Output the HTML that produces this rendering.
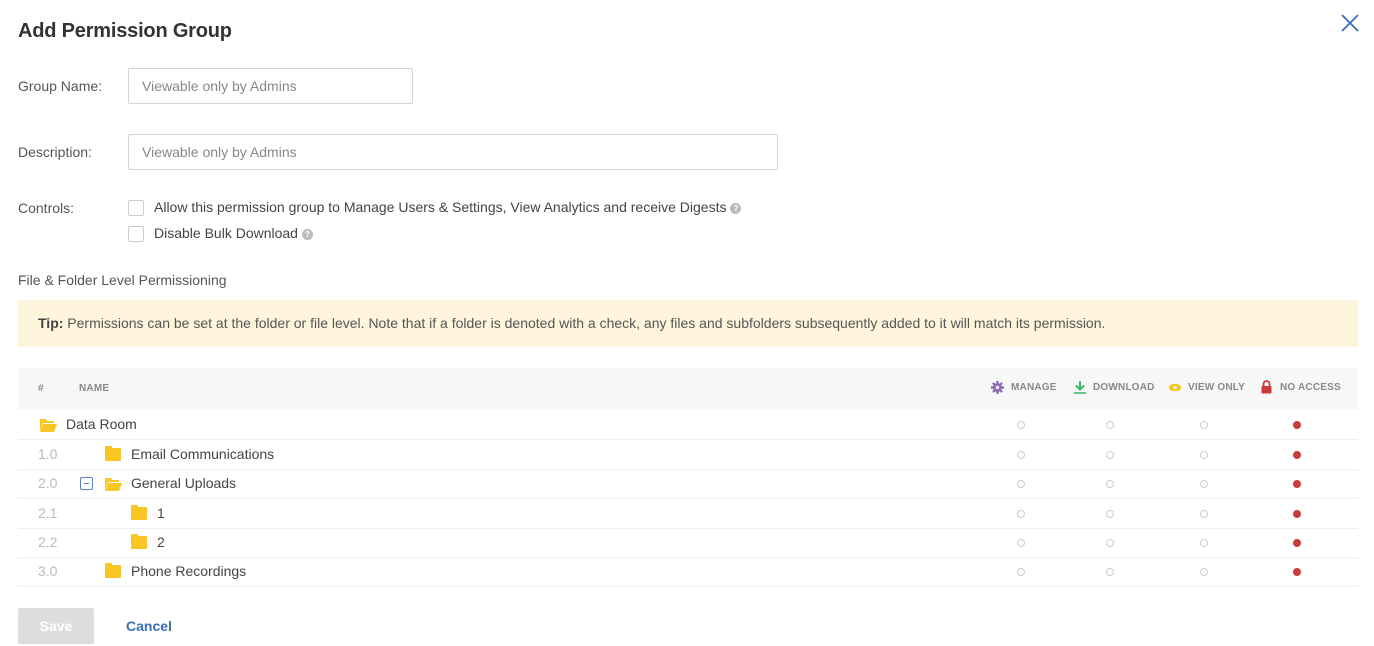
<!DOCTYPE html>
<html><head><style>
*{box-sizing:border-box;margin:0;padding:0}
body{width:1374px;height:646px;background:#fff;font-family:"Liberation Sans",Arial,sans-serif;color:#444;position:relative;overflow:hidden}
.abs{position:absolute}
h1{position:absolute;left:18px;top:20px;font-size:20px;font-weight:bold;color:#333;letter-spacing:-0.2px}
.lbl{position:absolute;left:18px;font-size:14px;color:#555}
.inp{position:absolute;left:128px;height:36px;border:1px solid #d5d5d5;border-radius:2px;font-size:14px;color:#888;padding:9px 13px}
.cb{position:absolute;left:128px;width:16px;height:16px;border:1px solid #ccc;border-radius:2px}
.ct{position:absolute;left:154px;font-size:14px;color:#444}
.q{display:inline-block;width:11px;height:11px;border-radius:50%;background:#bbb;color:#fff;font-size:8px;text-align:center;line-height:11px;font-weight:bold;vertical-align:middle;margin-left:4px}
.tip{position:absolute;left:18px;top:300px;width:1340px;height:47px;background:#fff5dd;font-size:14px;color:#555;padding:15px 20px}
.thead{position:absolute;left:18px;top:368px;width:1340px;height:42px;background:#f7f7f7;font-size:10px;font-weight:bold;color:#888;letter-spacing:.2px}
.row{position:absolute;left:18px;width:1340px;height:30px;border-bottom:1px solid #eee;font-size:14px}
.num{position:absolute;left:20px;top:6px;color:#bbb}
.nm{position:absolute;top:6px;color:#444}
.rad{position:absolute;top:11px;width:8px;height:8px;border:1px solid #ccc;border-radius:50%}
.red{background:#cc3b3b;border-color:#cc3b3b}
.fold{position:absolute;top:8px;width:16px;height:13px;background:#f9c623;border-radius:1px}
.fold:before{content:"";position:absolute;left:0;top:-2px;width:7px;height:3px;background:#f9c623;border-radius:1px 1px 0 0}
</style></head><body>
<h1>Add Permission Group</h1>
<svg class="abs" style="left:1341px;top:14px" width="18" height="18"><path d="M1 1L17 17M17 1L1 17" stroke="#3a6fb5" stroke-width="1.8"/></svg>
<div class="lbl" style="top:78px">Group Name:</div>
<div class="inp" style="top:68px;width:285px">Viewable only by Admins</div>
<div class="lbl" style="top:144px">Description:</div>
<div class="inp" style="top:134px;width:650px">Viewable only by Admins</div>
<div class="lbl" style="top:200px">Controls:</div>
<div class="cb" style="top:200px"></div>
<div class="ct" style="top:199px">Allow this permission group to Manage Users &amp; Settings, View Analytics and receive Digests<span class="q">?</span></div>
<div class="cb" style="top:226px"></div>
<div class="ct" style="top:225px">Disable Bulk Download<span class="q">?</span></div>
<div class="lbl" style="top:272px">File &amp; Folder Level Permissioning</div>
<div class="tip"><b style="color:#444">Tip:</b> Permissions can be set at the folder or file level. Note that if a folder is denoted with a check, any files and subfolders subsequently added to it will match its permission.</div>
<div class="thead">
<span class="abs" style="left:20px;top:15px">#</span>
<span class="abs" style="left:61px;top:15px">NAME</span>
<svg class="abs" style="left:973px;top:13px" width="13" height="13" viewBox="0 0 12 12"><circle cx="6" cy="6" r="4" fill="#8a6bb0"/><path d="M6 0V12M0 6H12M1.8 1.8L10.2 10.2M10.2 1.8L1.8 10.2" stroke="#8a6bb0" stroke-width="2.2"/><circle cx="6" cy="6" r="1.6" fill="#f7f7f7"/></svg>
<span class="abs" style="left:993px;top:14px">MANAGE</span>
<svg class="abs" style="left:1056px;top:13px" width="12" height="13"><path d="M6 0V8M2 4.5L6 8.5L10 4.5" stroke="#3cb86a" stroke-width="2" fill="none"/><path d="M0 12H12" stroke="#3cb86a" stroke-width="1.6"/></svg>
<span class="abs" style="left:1075px;top:14px">DOWNLOAD</span>
<svg class="abs" style="left:1150px;top:15px" width="14" height="9"><ellipse cx="7" cy="4.5" rx="6" ry="3.8" fill="#f5c518"/><circle cx="7" cy="4.5" r="1.8" fill="#f7f7f7"/></svg>
<span class="abs" style="left:1170px;top:14px">VIEW ONLY</span>
<svg class="abs" style="left:1243px;top:12px" width="11" height="14"><path d="M2.5 6V4a3 3 0 0 1 6 0v2" stroke="#cc3b3b" stroke-width="1.8" fill="none"/><rect x="0.5" y="6" width="10" height="7.5" rx="1" fill="#cc3b3b"/></svg>
<span class="abs" style="left:1262px;top:14px">NO ACCESS</span>
</div>
<div class="row" style="top:410px"><svg class="abs" style="left:22px;top:8px" width="17" height="14"><path d="M0 1h6l1 2h7v2H3L0 13z" fill="#f9c623"/><path d="M3 6h14l-3 8H0z" fill="#f9c623"/></svg><span class="nm" style="left:48px">Data Room</span>
<div class="rad" style="left:999px"></div><div class="rad" style="left:1088px"></div><div class="rad" style="left:1182px"></div><div class="rad red" style="left:1275px"></div></div>
<div class="row" style="top:440px"><span class="num">1.0</span><div class="fold" style="left:87px"></div><span class="nm" style="left:113px">Email Communications</span>
<div class="rad" style="left:999px"></div><div class="rad" style="left:1088px"></div><div class="rad" style="left:1182px"></div><div class="rad red" style="left:1275px"></div></div>
<div class="row" style="top:469px"><span class="num">2.0</span><div class="abs" style="left:62px;top:8px;width:13px;height:13px;border:1px solid #5b7fc0;border-radius:2px"><div class="abs" style="left:3px;top:5px;width:5px;height:1px;background:#5b7fc0"></div></div><svg class="abs" style="left:87px;top:8px" width="17" height="14"><path d="M0 1h6l1 2h7v2H3L0 13z" fill="#f9c623"/><path d="M3 6h14l-3 8H0z" fill="#f9c623"/></svg><span class="nm" style="left:113px">General Uploads</span>
<div class="rad" style="left:999px"></div><div class="rad" style="left:1088px"></div><div class="rad" style="left:1182px"></div><div class="rad red" style="left:1275px"></div></div>
<div class="row" style="top:499px"><span class="num">2.1</span><div class="fold" style="left:113px"></div><span class="nm" style="left:139px">1</span>
<div class="rad" style="left:999px"></div><div class="rad" style="left:1088px"></div><div class="rad" style="left:1182px"></div><div class="rad red" style="left:1275px"></div></div>
<div class="row" style="top:528px"><span class="num">2.2</span><div class="fold" style="left:113px"></div><span class="nm" style="left:139px">2</span>
<div class="rad" style="left:999px"></div><div class="rad" style="left:1088px"></div><div class="rad" style="left:1182px"></div><div class="rad red" style="left:1275px"></div></div>
<div class="row" style="top:557px"><span class="num">3.0</span><div class="fold" style="left:87px"></div><span class="nm" style="left:113px">Phone Recordings</span>
<div class="rad" style="left:999px"></div><div class="rad" style="left:1088px"></div><div class="rad" style="left:1182px"></div><div class="rad red" style="left:1275px"></div></div>
<div class="abs" style="left:18px;top:608px;width:76px;height:36px;background:#ddd;border-radius:2px;color:#fff;font-weight:bold;font-size:14px;text-align:center;line-height:36px">Save</div>
<div class="abs" style="left:126px;top:618px;font-size:14px;font-weight:bold;color:#3a6fb5">Cancel</div>
</body></html>
